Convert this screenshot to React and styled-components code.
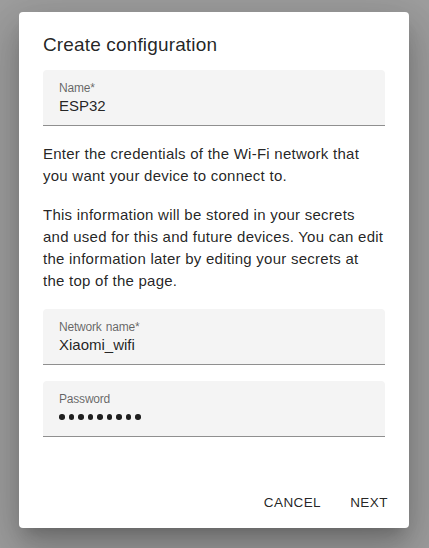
import React from "react";
import styled, { createGlobalStyle } from "styled-components";

const Global = createGlobalStyle`
  html, body { margin: 0; padding: 0; }
  body {
    font-family: "Liberation Sans", Arial, sans-serif;
    background: #9e9e9e;
  }
`;

const Page = styled.div`
  min-height: 548px;
  box-sizing: border-box;
  padding: 12px 0 0 19px;
  background: #9e9e9e;
`;

const Dialog = styled.div`
  width: 390px;
  background: #fff;
  border-radius: 4px;
  box-shadow: 0 11px 15px -7px rgba(0, 0, 0, 0.2),
    0 24px 38px 3px rgba(0, 0, 0, 0.14), 0 9px 46px 8px rgba(0, 0, 0, 0.12);
  display: flex;
  flex-direction: column;
`;

const Title = styled.h2`
  margin: 0;
  padding: 21px 24px 0;
  font-size: 19px;
  line-height: 24px;
  font-weight: 400;
  letter-spacing: 0.15px;
  color: rgba(0, 0, 0, 0.87);
`;

const Content = styled.div`
  padding: 13px 24px 39px;
  display: flex;
  flex-direction: column;
`;

const Field = styled.div`
  height: 56px;
  box-sizing: border-box;
  background: #f4f4f4;
  border-radius: 4px 4px 0 0;
  border-bottom: 1px solid #8f8f8f;
  padding: 10px 16px 0;
  display: flex;
  flex-direction: column;
  margin-top: ${(p) => p.$gap || 0}px;
`;

const Label = styled.div`
  font-size: 12px;
  line-height: 16px;
  letter-spacing: -0.2px;
  word-spacing: 1px;
  color: rgba(0, 0, 0, 0.6);
`;

const Value = styled.div`
  font-size: 15px;
  line-height: 20px;
  color: rgba(0, 0, 0, 0.87);
`;

const Dots = styled.div`
  display: flex;
  gap: 4px;
  height: 20px;
  align-items: center;
`;

const Dot = styled.span`
  width: 5.5px;
  height: 5.5px;
  border-radius: 50%;
  background: #1f1f1f;
`;

const Para = styled.p`
  margin: 17px 0 0;
  font-size: 15px;
  line-height: 22px;
  letter-spacing: 0.25px;
  white-space: nowrap;
  color: rgba(0, 0, 0, 0.87);
`;

const Actions = styled.div`
  display: flex;
  justify-content: flex-end;
  align-items: center;
  gap: 8px;
  padding: 8px;
  min-height: 52px;
  box-sizing: border-box;
`;

const Button = styled.button`
  min-width: 64px;
  height: 36px;
  padding: 0 8px;
  border: none;
  background: transparent;
  font-family: "Liberation Sans", Arial, sans-serif;
  font-size: 13.5px;
  letter-spacing: 0.4px;
  text-transform: uppercase;
  color: rgba(0, 0, 0, 0.87);
  cursor: pointer;
`;

export default function App() {
  return (
    <>
      <Global />
      <Page>
        <Dialog>
          <Title>Create configuration</Title>
          <Content>
            <Field>
              <Label>Name*</Label>
              <Value>ESP32</Value>
            </Field>
            <Para>
              Enter the credentials of the Wi-Fi network that
              <br />
              you want your device to connect to.
            </Para>
            <Para>
              This information will be stored in your secrets
              <br />
              and used for this and future devices. You can edit
              <br />
              the information later by editing your secrets at
              <br />
              the top of the page.
            </Para>
            <Field $gap={17}>
              <Label>Network name*</Label>
              <Value>Xiaomi_wifi</Value>
            </Field>
            <Field $gap={16}>
              <Label>Password</Label>
              <Dots>
                {Array.from({ length: 9 }).map((_, i) => (
                  <Dot key={i} />
                ))}
              </Dots>
            </Field>
          </Content>
          <Actions>
            <Button>Cancel</Button>
            <Button>Next</Button>
          </Actions>
        </Dialog>
      </Page>
    </>
  );
}
